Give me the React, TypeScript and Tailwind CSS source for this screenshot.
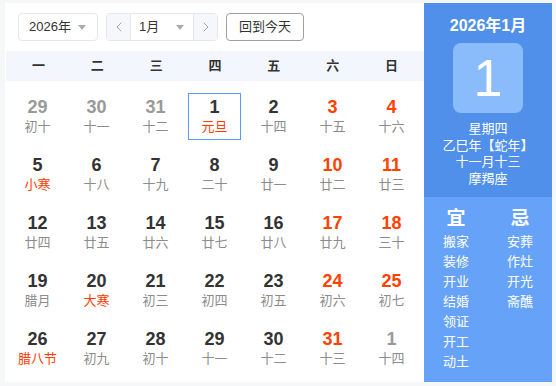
import { ChevronLeft, ChevronRight } from "lucide-react";

interface Day {
  n: number;
  lunar: string;
  other?: boolean;
  weekend?: boolean;
  fest?: boolean;
  today?: boolean;
}

const weekdays = ["一", "二", "三", "四", "五", "六", "日"];

const rows: Day[][] = [
  [
    { n: 29, lunar: "初十", other: true },
    { n: 30, lunar: "十一", other: true },
    { n: 31, lunar: "十二", other: true },
    { n: 1, lunar: "元旦", fest: true, today: true },
    { n: 2, lunar: "十四" },
    { n: 3, lunar: "十五", weekend: true },
    { n: 4, lunar: "十六", weekend: true },
  ],
  [
    { n: 5, lunar: "小寒", fest: true },
    { n: 6, lunar: "十八" },
    { n: 7, lunar: "十九" },
    { n: 8, lunar: "二十" },
    { n: 9, lunar: "廿一" },
    { n: 10, lunar: "廿二", weekend: true },
    { n: 11, lunar: "廿三", weekend: true },
  ],
  [
    { n: 12, lunar: "廿四" },
    { n: 13, lunar: "廿五" },
    { n: 14, lunar: "廿六" },
    { n: 15, lunar: "廿七" },
    { n: 16, lunar: "廿八" },
    { n: 17, lunar: "廿九", weekend: true },
    { n: 18, lunar: "三十", weekend: true },
  ],
  [
    { n: 19, lunar: "腊月" },
    { n: 20, lunar: "大寒", fest: true },
    { n: 21, lunar: "初三" },
    { n: 22, lunar: "初四" },
    { n: 23, lunar: "初五" },
    { n: 24, lunar: "初六", weekend: true },
    { n: 25, lunar: "初七", weekend: true },
  ],
  [
    { n: 26, lunar: "腊八节", fest: true },
    { n: 27, lunar: "初九" },
    { n: 28, lunar: "初十" },
    { n: 29, lunar: "十一" },
    { n: 30, lunar: "十二" },
    { n: 31, lunar: "十三", weekend: true },
    { n: 1, lunar: "十四", other: true },
  ],
];

const yi = ["搬家", "装修", "开业", "结婚", "领证", "开工", "动土"];
const ji = ["安葬", "作灶", "开光", "斋醮"];

function Caret() {
  return (
    <span className="w-0 h-0 border-l-[4px] border-r-[4px] border-t-[5px] border-l-transparent border-r-transparent border-t-[#a8abb2]" />
  );
}

export default function App() {
  return (
    <div
      className="w-[556px] h-[386px] bg-[#f6f7f9] pt-[3px] pl-[5px]"
      style={{ fontFamily: '"Liberation Sans", "Noto Sans CJK SC", sans-serif' }}
    >
      <div className="flex w-[547px] h-[379px]">
        {/* Left: month grid */}
        <div className="w-[419px] bg-white">
          {/* Toolbar */}
          <div className="flex items-center h-[48px] pl-[13px] gap-2">
            <div className="flex items-center justify-between w-[80px] h-[28px] border border-[#e4e7ed] rounded pl-[10px] pr-[11px] text-[13px] text-[#333]">
              <span>2026年</span>
              <Caret />
            </div>
            <div className="flex h-[28px] w-[112px] border border-[#e4e7ed] rounded text-[13px] text-[#333]">
              <div className="w-[24px] flex items-center justify-center bg-[#f5f7fa] border-r border-[#e4e7ed] text-[#909399]">
                <ChevronLeft size={16} strokeWidth={1.25} />
              </div>
              <div className="flex-1 flex items-center justify-between pl-[8px] pr-[9px]">
                <span>1月</span>
                <Caret />
              </div>
              <div className="w-[24px] flex items-center justify-center bg-[#f5f7fa] border-l border-[#e4e7ed] text-[#909399]">
                <ChevronRight size={16} strokeWidth={1.25} />
              </div>
            </div>
            <div className="flex items-center justify-center w-[78px] h-[28px] border border-[#a0a0a0] rounded text-[13px] text-[#333]">
              回到今天
            </div>
          </div>

          {/* Weekday header */}
          <div className="grid grid-cols-7 h-[30px] items-center bg-[#f3f7fd] px-[3px] ml-[1px]">
            {weekdays.map((w) => (
              <div key={w} className="text-center text-[13px] font-bold text-[#333]">
                {w}
              </div>
            ))}
          </div>

          {/* Days */}
          <div className="px-[3px] pt-[6px]">
            {rows.map((row, i) => (
              <div key={i} className="grid grid-cols-7 h-[58px]">
                {row.map((d, j) => (
                  <div key={j} className="flex items-center justify-center">
                    <div
                      className={`flex flex-col items-center justify-center w-[53px] h-[47px] ${
                        d.today ? "border border-[#5b9bf8]" : ""
                      }`}
                    >
                      <span
                        className={`text-[18px] font-bold leading-[22px] ${
                          d.other
                            ? "text-[#999]"
                            : d.weekend
                            ? "text-[#ff4200]"
                            : "text-[#333]"
                        }`}
                      >
                        {d.n}
                      </span>
                      <span
                        className={`text-[13px] leading-[18px] ${
                          d.fest ? "text-[#ff3a00]" : "text-[#8c8c8c]"
                        }`}
                      >
                        {d.lunar}
                      </span>
                    </div>
                  </div>
                ))}
              </div>
            ))}
          </div>
        </div>

        {/* Right: day detail */}
        <div className="w-[128px] flex flex-col text-white">
          <div className="h-[194px] bg-[#5090ea] flex flex-col items-center">
            <div className="mt-[13px] text-[16px] font-bold leading-[20px]">2026年1月</div>
            <div className="mt-[7px] w-[70px] h-[70px] rounded-lg bg-[#8abbfb] flex items-center justify-center text-[52px] leading-none">
              1
            </div>
            <div className="mt-[8px] text-[13px] leading-[16.5px] text-center">
              <div>星期四</div>
              <div>乙巳年【蛇年】</div>
              <div>十一月十三</div>
              <div>摩羯座</div>
            </div>
          </div>
          <div className="flex-1 bg-[#66a3f8] grid grid-cols-2 pt-[10px]">
            <div className="flex flex-col items-center">
              <div className="text-[19px] font-bold leading-[24px] mb-[1px]">宜</div>
              {yi.map((t) => (
                <div key={t} className="text-[13px] leading-[20px]">
                  {t}
                </div>
              ))}
            </div>
            <div className="flex flex-col items-center">
              <div className="text-[19px] font-bold leading-[24px] mb-[1px]">忌</div>
              {ji.map((t) => (
                <div key={t} className="text-[13px] leading-[20px]">
                  {t}
                </div>
              ))}
            </div>
          </div>
        </div>
      </div>
    </div>
  );
}
